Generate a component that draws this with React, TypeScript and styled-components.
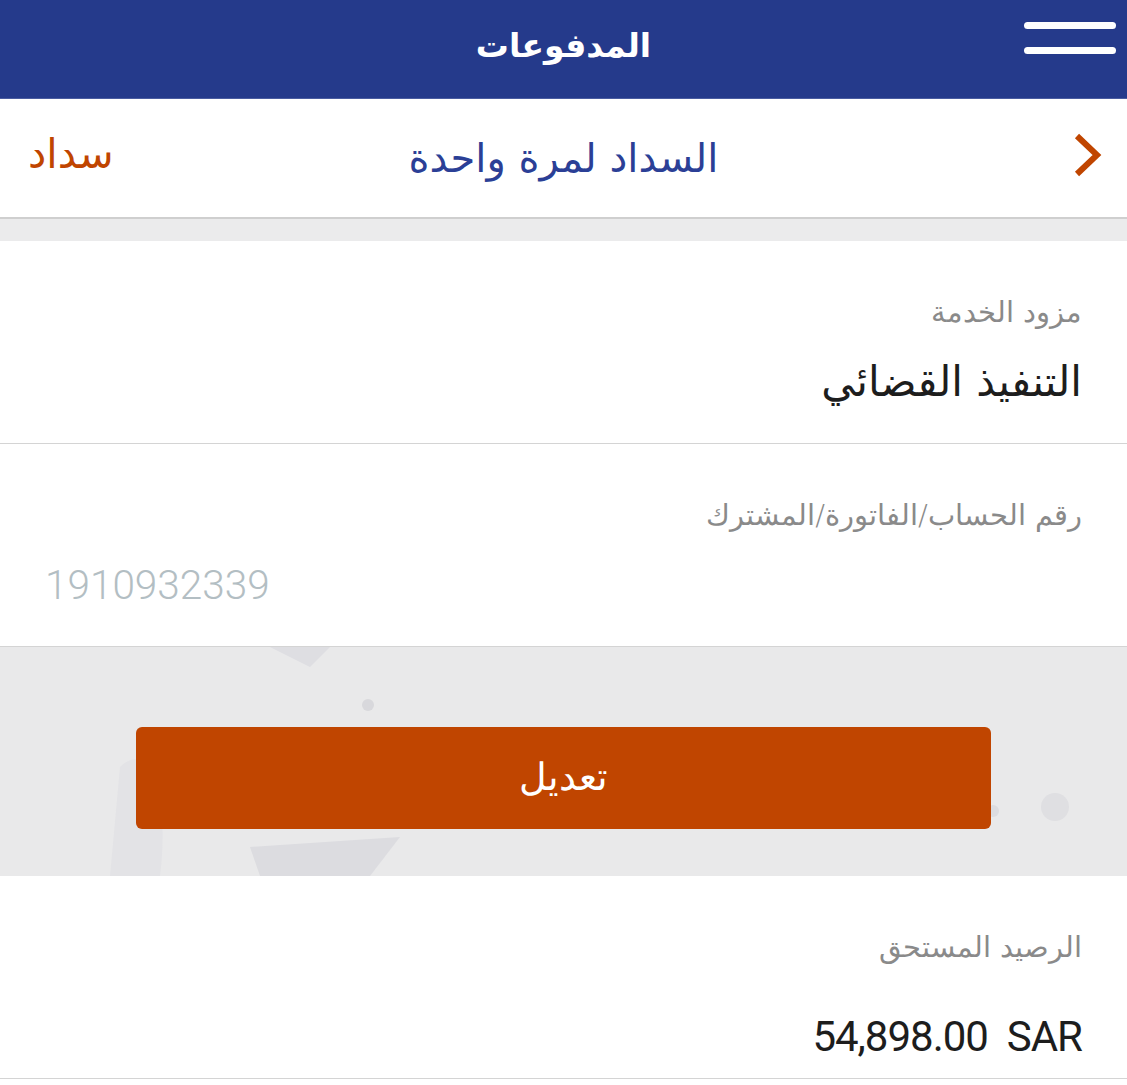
import React from "react";
import styled, { createGlobalStyle } from "styled-components";

const GlobalStyle = createGlobalStyle`
  html, body {
    margin: 0;
    padding: 0;
    background: #ffffff;
  }
  body {
    font-family: "DejaVu Sans", "Noto Sans", sans-serif;
  }
`;

const ORANGE = "#c04500";
const BLUE = "#253a8b";

const Page = styled.div`
  direction: rtl;
  width: 1127px;
  display: flex;
  flex-direction: column;
`;

const Header = styled.header`
  height: 98px;
  background: ${BLUE};
  border-bottom: 1px solid #4a5ca0;
  display: grid;
  grid-template-columns: 140px 1fr 140px;
  align-items: center;
`;

const MenuButton = styled.button`
  width: 92px;
  height: 32px;
  margin-right: 11px;
  margin-bottom: 22px;
  padding: 0;
  border: none;
  background: none;
  display: flex;
  flex-direction: column;
  justify-content: space-between;
`;

const MenuBar = styled.span`
  display: block;
  height: 7px;
  border-radius: 4px;
  background: #ffffff;
`;

const HeaderTitle = styled.h1`
  margin: 0 0 8px;
  text-align: center;
  color: #ffffff;
  font-size: 33px;
  font-weight: bold;
`;

const SubHeader = styled.div`
  height: 118px;
  background: #ffffff;
  border-bottom: 2px solid #cfcfcf;
  display: grid;
  grid-template-columns: 140px 1fr 140px;
  align-items: center;
`;

const BackIcon = styled.svg`
  width: 30px;
  height: 46px;
  margin-right: 24px;
  margin-bottom: 6px;
`;

const SubTitle = styled.h2`
  margin: 0;
  text-align: center;
  color: #2b3f96;
  font-size: 40px;
  font-weight: normal;
`;

const PayLink = styled.span`
  justify-self: end;
  margin-left: 28px;
  margin-bottom: 8px;
  color: ${ORANGE};
  font-size: 41px;
`;

const GreyBand = styled.div<{ $height: number }>`
  height: ${(p) => p.$height}px;
  background: #ebebec;
`;

const Field = styled.div<{ $gap: number }>`
  background: #ffffff;
  border-bottom: 1px solid #d4d4d4;
  padding: 50px 45px 0;
  height: 152px;
  display: flex;
  flex-direction: column;
  gap: ${(p) => p.$gap}px;
`;

const Label = styled.div`
  color: #8a8a8a;
  font-size: 29px;
  font-weight: 300;
  line-height: 42px;
`;

const Value = styled.div`
  color: #1d1d1d;
  font-size: 42px;
  line-height: 54px;
`;

const NumberValue = styled.div<{ $muted?: boolean }>`
  font-family: Roboto, "DejaVu Sans", sans-serif;
  font-weight: ${(p) => (p.$muted ? 300 : 400)};
  color: ${(p) => (p.$muted ? "#b3bec3" : "#1d1d1d")};
  font-size: ${(p) => (p.$muted ? 40.5 : 42)}px;
  letter-spacing: ${(p) => (p.$muted ? 0 : -1)}px;
  line-height: 50px;
  direction: ltr;
  text-align: ${(p) => (p.$muted ? "left" : "right")};
`;

const ActionArea = styled.div`
  background: #e9e9ea;
  padding: 80px 136px 47px;
  position: relative;
  overflow: hidden;
`;

const Backdrop = styled.svg`
  position: absolute;
  inset: 0;
  width: 100%;
  height: 100%;
`;

const EditButton = styled.button`
  position: relative;
  width: 100%;
  height: 102px;
  border: none;
  border-radius: 6px;
  background: ${ORANGE};
  color: #ffffff;
  font-family: "DejaVu Sans", sans-serif;
  font-size: 38px;
  font-weight: 300;
  padding-bottom: 4px;
`;

export default function App() {
  return (
    <>
      <GlobalStyle />
      <Page>
        <Header>
          <MenuButton aria-label="menu">
            <MenuBar />
            <MenuBar />
          </MenuButton>
          <HeaderTitle>المدفوعات</HeaderTitle>
          <span />
        </Header>

        <SubHeader>
          <BackIcon viewBox="0 0 30 46">
            <polyline
              points="4,4 24,23 4,42"
              fill="none"
              stroke={ORANGE}
              strokeWidth="6"
            />
          </BackIcon>
          <SubTitle>السداد لمرة واحدة</SubTitle>
          <PayLink>سداد</PayLink>
        </SubHeader>

        <GreyBand $height={22} />

        <Field $gap={22}>
          <Label>مزود الخدمة</Label>
          <Value>التنفيذ القضائي</Value>
        </Field>

        <Field $gap={24}>
          <Label>رقم الحساب/الفاتورة/المشترك</Label>
          <NumberValue $muted>1910932339</NumberValue>
        </Field>

        <ActionArea>
          <Backdrop viewBox="0 0 1127 229" preserveAspectRatio="none">
            <path d="M270 0 L330 0 L310 20 Z" fill="#dedee2" />
            <path d="M120 120 C150 90 170 150 160 229 L110 229 Z" fill="#e3e3e6" />
            <path d="M250 200 L400 190 L370 229 L260 229 Z" fill="#dcdce0" />
            <circle cx="368" cy="58" r="6" fill="#d8d8dc" />
            <circle cx="993" cy="164" r="6" fill="#dcdce0" />
            <circle cx="1055" cy="160" r="14" fill="#dfdfe2" />
          </Backdrop>
          <EditButton>تعديل</EditButton>
        </ActionArea>

        <Field $gap={44}>
          <Label>الرصيد المستحق</Label>
          <NumberValue>54,898.00&nbsp;&nbsp;SAR</NumberValue>
        </Field>
      </Page>
    </>
  );
}
